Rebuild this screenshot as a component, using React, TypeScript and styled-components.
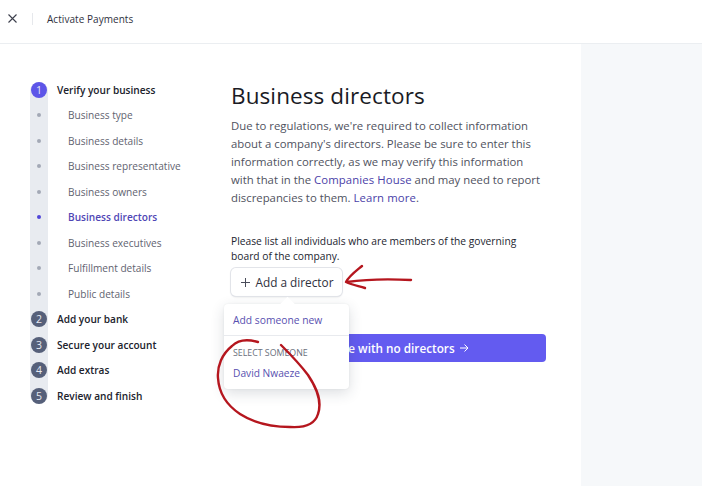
import React from "react";
import styled, { createGlobalStyle } from "styled-components";

const Global = createGlobalStyle`
  html, body { margin: 0; padding: 0; background: #fff; }
  body { font-family: "Open Sans", "Noto Sans", sans-serif; width: 702px; height: 486px; overflow: hidden; }
`;
const Page = styled.div`
  position: relative; width: 702px; height: 486px; display: flex; flex-direction: column;
`;
const Header = styled.header`
  height: 43px; flex: none; box-sizing: content-box; display: flex; align-items: center; padding: 0 0 0 7px;
  border-bottom: 1px solid #ebeef1; color: #30313d;
  & > * { position: relative; top: -3px; }
`;
const Close = styled.svg`width: 11px; height: 11px; flex: none;`;
const Divider = styled.span`width: 1px; height: 12px; background: #e6e8ec; margin: 0 14px 0 14px;`;
const HeaderTitle = styled.span`font-size: 10px; font-weight: 500; letter-spacing: .05px;`;
const Body = styled.div`flex: 1; display: flex; min-height: 0;`;
const Main = styled.main`width: 581px; flex: none; display: flex; padding-top: 33px; box-sizing: border-box;`;
const Aside = styled.aside`flex: 1; background: #f6f8fa;`;
const Stepper = styled.ol`
  list-style: none; margin: 0 0 0 30px; padding: 0; width: 201px; height: 331.5px; position: relative;
  &::before { content: ""; position: absolute; left: 0; top: 5px; width: 18px; height: 322px; background: #e8ebf0; border-radius: 9px; }
`;
const Step = styled.li`
  position: relative; height: 25.5px; display: flex; align-items: center; font-size: 10.1px;
  font-weight: ${p => p.$major ? 600 : 400};
  color: ${p => p.$active ? "#4f46b5" : p.$major ? "#20222c" : "#5f6370"};
  padding-left: ${p => p.$major ? 27 : 38}px;
  ${p => p.$active && "font-weight: 600;"}
`;
const Badge = styled.span`
  position: absolute; left: 1px; top: 50%; transform: translateY(-50%); width: 16px; height: 16px; border-radius: 50%;
  display: flex; align-items: center; justify-content: center; font-size: 10.5px; font-weight: 400;
  color: #e8ebf3; background: ${p => p.$on ? "#5d55e8" : "#56607a"};
`;
const Dot = styled.span`
  position: absolute; left: 7px; top: 50%; transform: translateY(-50%); width: 4px; height: 4px; border-radius: 50%;
  background: ${p => p.$on ? "#5046d8" : "#a3a9b6"};
`;
const Content = styled.section`width: 316px; flex: none; padding-top: 3px;`;
const Title = styled.h1`margin: 0; font-size: 22.5px; line-height: 32px; font-weight: 500; color: #1a1b25; letter-spacing: .1px;`;
const Lead = styled.p`margin: 5px 0 0; font-size: 11.35px; line-height: 17.9px; color: #4f5260; width: 313px;`;
const Link = styled.span`color: #4a41a8; font-weight: 500; letter-spacing: .1px;`;
const Note = styled.p`margin: 27px 0 0; font-size: 10.25px; line-height: 15px; color: #23252f; font-weight: 500;`;
const Anchor = styled.div`position: relative; margin-top: 4.5px; height: 66px;`;
const AddButton = styled.button`
  width: 111px; height: 28px; padding: 0; border: 0; border-radius: 5px; background: #fff; display: flex; align-items: center; justify-content: center; gap: 5px;
  box-shadow: 0 0 0 1px #e2e4e9, 0 1px 2px rgba(40,45,60,.18); font: 500 11.8px "Open Sans", sans-serif; color: #30313d;
`;
const Primary = styled.button`
  width: 315px; height: 28px; padding: 0 5px 0 0; border: 0; border-radius: 4px; background: #635bf0; color: #fff; margin-top: 0;
  font: 600 11.75px "Open Sans", sans-serif; display: flex; align-items: center; justify-content: center; gap: 4px;
`;
const Menu = styled.div`
  position: absolute; left: -7px; top: 36px; width: 125px; height: 85px; background: #fff; border-radius: 4px;
  box-shadow: 0 4px 14px rgba(40,50,70,.16), 0 0 2px rgba(40,50,70,.08); z-index: 1; display: flex; flex-direction: column;
  &::before { content: ""; position: absolute; left: 58px; top: -5px; width: 11px; height: 11px; background: #fff; transform: rotate(45deg); }
`;
const MenuTop = styled.div`
  height: 31px; display: flex; align-items: center; padding-left: 9px; border-bottom: 1px solid #e8eaee;
  font-size: 10.3px; font-weight: 500; color: #5850b0; position: relative;
`;
const MenuLabel = styled.div`margin: 11px 0 0 9px; font-size: 8.8px; line-height: 12px; color: #6a6f7c;`;
const MenuItem = styled.div`margin: 7px 0 0 9px; font-size: 10.2px; line-height: 14px; font-weight: 500; color: #5850b0;`;
const Ink = styled.svg`position: absolute; left: 0; top: 0; width: 702px; height: 486px; pointer-events: none; z-index: 2;`;

const subs = ["Business type", "Business details", "Business representative", "Business owners", "Business directors", "Business executives", "Fulfillment details", "Public details"];
const later = ["Add your bank", "Secure your account", "Add extras", "Review and finish"];

export default function App() {
  return (
    <Page>
      <Global />
      <Header>
        <Close viewBox="0 0 11 11" fill="none" stroke="#3c3f4c" strokeWidth="1.1"><path d="M1.5 1.5l8 8M9.5 1.5l-8 8" /></Close>
        <Divider />
        <HeaderTitle>Activate Payments</HeaderTitle>
      </Header>
      <Body>
        <Main>
          <Stepper>
            <Step $major><Badge $on>1</Badge>Verify your business</Step>
            {subs.map(s => {
              const on = s === "Business directors";
              return <Step key={s} $active={on}><Dot $on={on} />{s}</Step>;
            })}
            {later.map((s, i) => <Step key={s} $major><Badge>{i + 2}</Badge>{s}</Step>)}
          </Stepper>
          <Content>
            <Title>Business directors</Title>
            <Lead>
              Due to regulations, we're required to collect information about a company's directors. Please be sure to enter this information correctly, as we may verify this information with that in the <Link>Companies House</Link> and may need to report discrepancies to them. <Link>Learn more</Link>.
            </Lead>
            <Note>Please list all individuals who are members of the governing board of the company.</Note>
            <Anchor>
              <AddButton>
                <svg width="11" height="11" viewBox="0 0 11 11" fill="none" stroke="#4a4d5a" strokeWidth="1"><path d="M5.5 1v9M1 5.5h9" /></svg>
                Add a director
              </AddButton>
              <Menu>
                <MenuTop>Add someone new</MenuTop>
                <MenuLabel>SELECT SOMEONE</MenuLabel>
                <MenuItem>David Nwaeze</MenuItem>
              </Menu>
            </Anchor>
            <Primary>
              Continue with no directors
              <svg width="10" height="10" viewBox="0 0 10 10" fill="none" stroke="#fff" strokeWidth="1"><path d="M1 5h8M5.5 1.5L9 5 5.5 8.5" /></svg>
            </Primary>
          </Content>
        </Main>
        <Aside />
      </Body>
      <Ink viewBox="0 0 702 486" fill="none" stroke="#b5161e" strokeLinecap="round" strokeLinejoin="round" strokeWidth="2.4">
        <path d="M411 280C392 279 368 279 347 282M362 266C356 271 349 276 346 282C352 285 359 286 365 288" />
        <path d="M258 342C248 339 238 340 232 346C222 354 217 366 218 378C219 394 228 406 240 414C254 423 272 427 290 427C305 428 315 424 318 414C322 402 318 390 308 375C299 363 289 353 281 345" />
      </Ink>
    </Page>
  );
}
